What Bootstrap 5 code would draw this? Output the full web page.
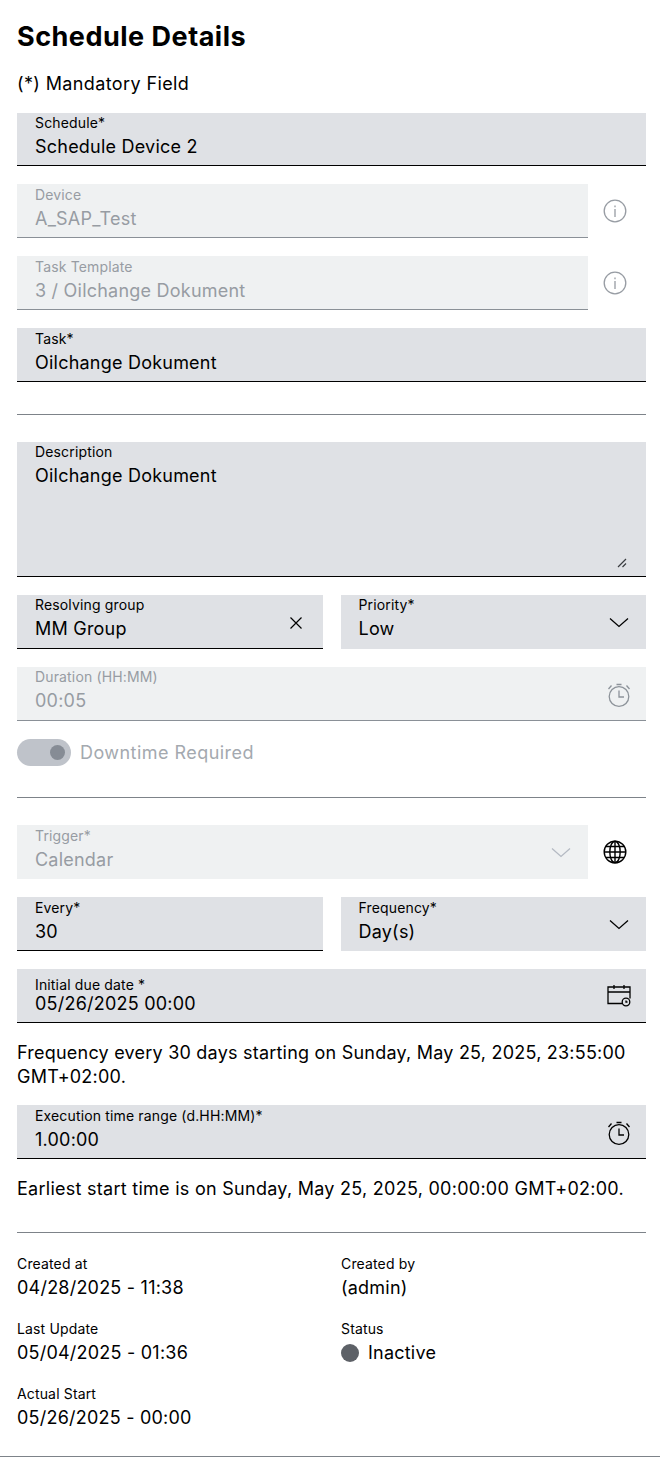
<!DOCTYPE html>
<html lang="en">
<head>
<meta charset="utf-8">
<title>Schedule Details</title>
<link href="https://cdn.jsdelivr.net/npm/bootstrap@5.3.0/dist/css/bootstrap.min.css" rel="stylesheet">
<style>
html,body{margin:0;background:#fff;}
body{font-family:"Inter","Noto Sans",sans-serif;color:#000;font-size:18px;line-height:24px;letter-spacing:.22px;height:1460px;overflow:hidden;}
.sheet{padding:0 14px 0 17px;}
.ttl{font-size:27px;line-height:36px;font-weight:700;margin:19px 0 0;letter-spacing:.5px;}
.mand{margin:17px 0 17px;line-height:24px;letter-spacing:.38px;}
.stack{display:flex;flex-direction:column;gap:18px;}
.fld{position:relative;background:#dfe1e5;border-bottom:1px solid #000;height:54px;padding:0 18px;}
.grow{flex:1 1 0;min-width:0;}
.fld.first{height:53px;}
.fld.noline{border-bottom:0;}
.fld.off{background:#eff1f2;border-bottom-color:#8a9097;color:#979ca3;}
.lbl{display:block;font-size:14px;line-height:18px;letter-spacing:.15px;padding-top:2px;margin:0;height:20px;white-space:nowrap;}
.val{display:block;width:100%;border:0;background:transparent;padding:0;font:inherit;font-size:18px;line-height:24px;letter-spacing:.22px;height:24px;margin-top:3px;color:inherit;outline:0;}
.first .lbl{padding-top:1px;height:19px;}
.up .lbl{padding-top:1px;}
.up .val{margin-top:2px;}
.tight .lbl{padding-top:7px;height:23px;}
.tight .val{margin-top:0;}
.fld.off .val{-webkit-text-fill-color:#979ca3;opacity:1;}
.txtbox{height:135px;}
.txtbox textarea{height:90px;resize:none;}
.ico{position:absolute;right:15px;top:16px;width:24px;height:24px;}
.ico.cal{top:14px;}
.sideico{flex:0 0 54px;display:flex;align-items:center;justify-content:center;}
.sideico svg{width:24px;height:24px;}
.sidewrap{padding-right:4px;}
.pair{display:flex;gap:18px;}
.grip{position:absolute;right:18px;bottom:7px;width:12px;height:12px;}
.rule{border:0;border-top:1px solid #7d8389;opacity:1;margin:0;}
.tog{display:flex;align-items:center;gap:9px;height:27px;color:#a4a9af;letter-spacing:.45px;}
.tog-track{width:54px;height:27px;border-radius:14px;background:#bfc3ca;display:flex;align-items:center;justify-content:flex-end;padding-right:6px;}
.tog-dot{width:15px;height:15px;border-radius:50%;background:#868c95;}
.note{line-height:24px;margin:0;}
.note-wide{letter-spacing:.27px;}
.meta{display:grid;grid-template-columns:324px 1fr;row-gap:20px;}
.meta-l{font-size:14px;line-height:18px;letter-spacing:.15px;}
.meta-v{line-height:24px;margin-top:3px;display:flex;align-items:center;gap:9px;}
.dotst{width:18px;height:18px;border-radius:50%;background:#5d6167;}
.endrule{border-top:1px solid #7d8389;position:absolute;left:0;right:0;top:1456px;}
</style>
</head>
<body>
<div class="sheet">
  <h1 class="ttl">Schedule Details</h1>
  <p class="mand">(*) Mandatory Field</p>
  <div class="stack">
    <div class="fld first"><label class="lbl" for="f1">Schedule*</label><input class="val" id="f1" value="Schedule Device 2"></div>

    <div class="d-flex sidewrap">
      <div class="fld off grow"><label class="lbl" for="f2">Device</label><input class="val" id="f2" value="A_SAP_Test" disabled></div>
      <div class="sideico"><svg viewBox="0 0 24 24" fill="none" stroke="#979ca3" stroke-width="1.3"><circle cx="12" cy="12" r="10.8"/><path d="M12 10v8M12 6.6v1.6"/></svg></div>
    </div>
    <div class="d-flex sidewrap">
      <div class="fld off grow"><label class="lbl" for="f3">Task Template</label><input class="val" id="f3" value="3 / Oilchange Dokument" disabled></div>
      <div class="sideico"><svg viewBox="0 0 24 24" fill="none" stroke="#979ca3" stroke-width="1.3"><circle cx="12" cy="12" r="10.8"/><path d="M12 10v8M12 6.6v1.6"/></svg></div>
    </div>

    <div class="fld"><label class="lbl" for="f4">Task*</label><input class="val" id="f4" value="Oilchange Dokument"></div>
  </div>

  <hr class="rule" style="margin:32px 0 27px">

  <div class="stack">
    <div class="fld txtbox up"><label class="lbl" for="f5">Description</label><textarea class="val" id="f5">Oilchange Dokument</textarea>
      <svg class="grip" viewBox="0 0 12 12" fill="none" stroke="#3a3d41" stroke-width="1.2"><path d="M2 10 10 2M6.5 10 10 6.5"/></svg>
    </div>

    <div class="pair">
      <div class="fld grow up"><label class="lbl" for="f6">Resolving group</label><input class="val" id="f6" value="MM Group">
        <svg class="ico" viewBox="0 0 24 24" fill="none" stroke="#000" stroke-width="1.2"><path d="M6.5 6.5l11 11M17.5 6.5l-11 11"/></svg>
      </div>
      <div class="fld noline grow up"><label class="lbl" for="f7">Priority*</label><input class="val" id="f7" value="Low">
        <svg class="ico" viewBox="0 0 24 24" fill="none" stroke="#000" stroke-width="1.3"><path d="M3 7.5l9 8 9-8"/></svg>
      </div>
    </div>

    <div class="fld off up"><label class="lbl" for="f8">Duration (HH:MM)</label><input class="val" id="f8" value="00:05" disabled>
      <svg class="ico" viewBox="0 0 24 24" fill="none" stroke="#8d939a" stroke-width="1.3"><circle cx="12" cy="13.5" r="9.8"/><path d="M12 7.5v6.5h5M9.5 1.5h5M1.5 6l3-3.5M22.5 6l-3-3.5"/></svg>
    </div>

    <div class="tog"><div class="tog-track"><div class="tog-dot"></div></div><span>Downtime Required</span></div>
  </div>

  <hr class="rule" style="margin:31px 0 27px">

  <div class="stack">
    <div class="d-flex sidewrap">
      <div class="fld off noline grow"><label class="lbl" for="f9">Trigger*</label><input class="val" id="f9" value="Calendar" disabled>
        <svg class="ico" viewBox="0 0 24 24" fill="none" stroke="#b4bac3" stroke-width="1.3"><path d="M3 7.5l9 8 9-8"/></svg>
      </div>
      <div class="sideico"><svg viewBox="0 0 24 24" fill="none" stroke="#000" stroke-width="1.4"><circle cx="12" cy="12" r="10.8"/><ellipse cx="12" cy="12" rx="5.2" ry="10.8"/><path d="M12 1.2v21.6M1.2 12h21.6M3 6.5h18M3 17.5h18"/></svg></div>
    </div>

    <div class="pair">
      <div class="fld grow"><label class="lbl" for="f10">Every*</label><input class="val" id="f10" value="30"></div>
      <div class="fld noline grow"><label class="lbl" for="f11">Frequency*</label><input class="val" id="f11" value="Day(s)">
        <svg class="ico" viewBox="0 0 24 24" fill="none" stroke="#000" stroke-width="1.3"><path d="M3 7.5l9 8 9-8"/></svg>
      </div>
    </div>

    <div class="fld tight"><label class="lbl" for="f12">Initial due date *</label><input class="val" id="f12" value="05/26/2025 00:00">
      <svg class="ico cal" viewBox="0 0 24 24" fill="none" stroke="#000" stroke-width="1.3"><path d="M15 20.5H1V4h22v11.500M1 9h22M7 2v4M17 2v4"/><circle cx="19" cy="19" r="3.800"/><path d="M19 17.500v1.500h1.500"/></svg>
    </div>
  </div>

  <p class="note" style="margin:18px 0 16px">Frequency every 30 days starting on Sunday, May 25, 2025, 23:55:00 GMT+02:00.</p>

  <div class="fld"><label class="lbl" for="f13">Execution time range (d.HH:MM)*</label><input class="val" id="f13" value="1.00:00">
    <svg class="ico" viewBox="0 0 24 24" fill="none" stroke="#000" stroke-width="1.3"><circle cx="12" cy="13.5" r="9.8"/><path d="M12 7.5v6.5h5M9.5 1.5h5M1.5 6l3-3.5M22.5 6l-3-3.5"/></svg>
  </div>

  <p class="note note-wide" style="margin:18px 0 31px">Earliest start time is on Sunday, May 25, 2025, 00:00:00 GMT+02:00.</p>

  <hr class="rule" style="margin:0 0 22px">

  <div class="meta">
    <div><div class="meta-l">Created at</div><div class="meta-v">04/28/2025 - 11:38</div></div>
    <div><div class="meta-l">Created by</div><div class="meta-v">(admin)</div></div>
    <div><div class="meta-l">Last Update</div><div class="meta-v">05/04/2025 - 01:36</div></div>
    <div><div class="meta-l">Status</div><div class="meta-v"><span class="dotst"></span><span>Inactive</span></div></div>
    <div><div class="meta-l">Actual Start</div><div class="meta-v">05/26/2025 - 00:00</div></div>
  </div>
</div>
<div class="endrule"></div>
</body>
</html>
